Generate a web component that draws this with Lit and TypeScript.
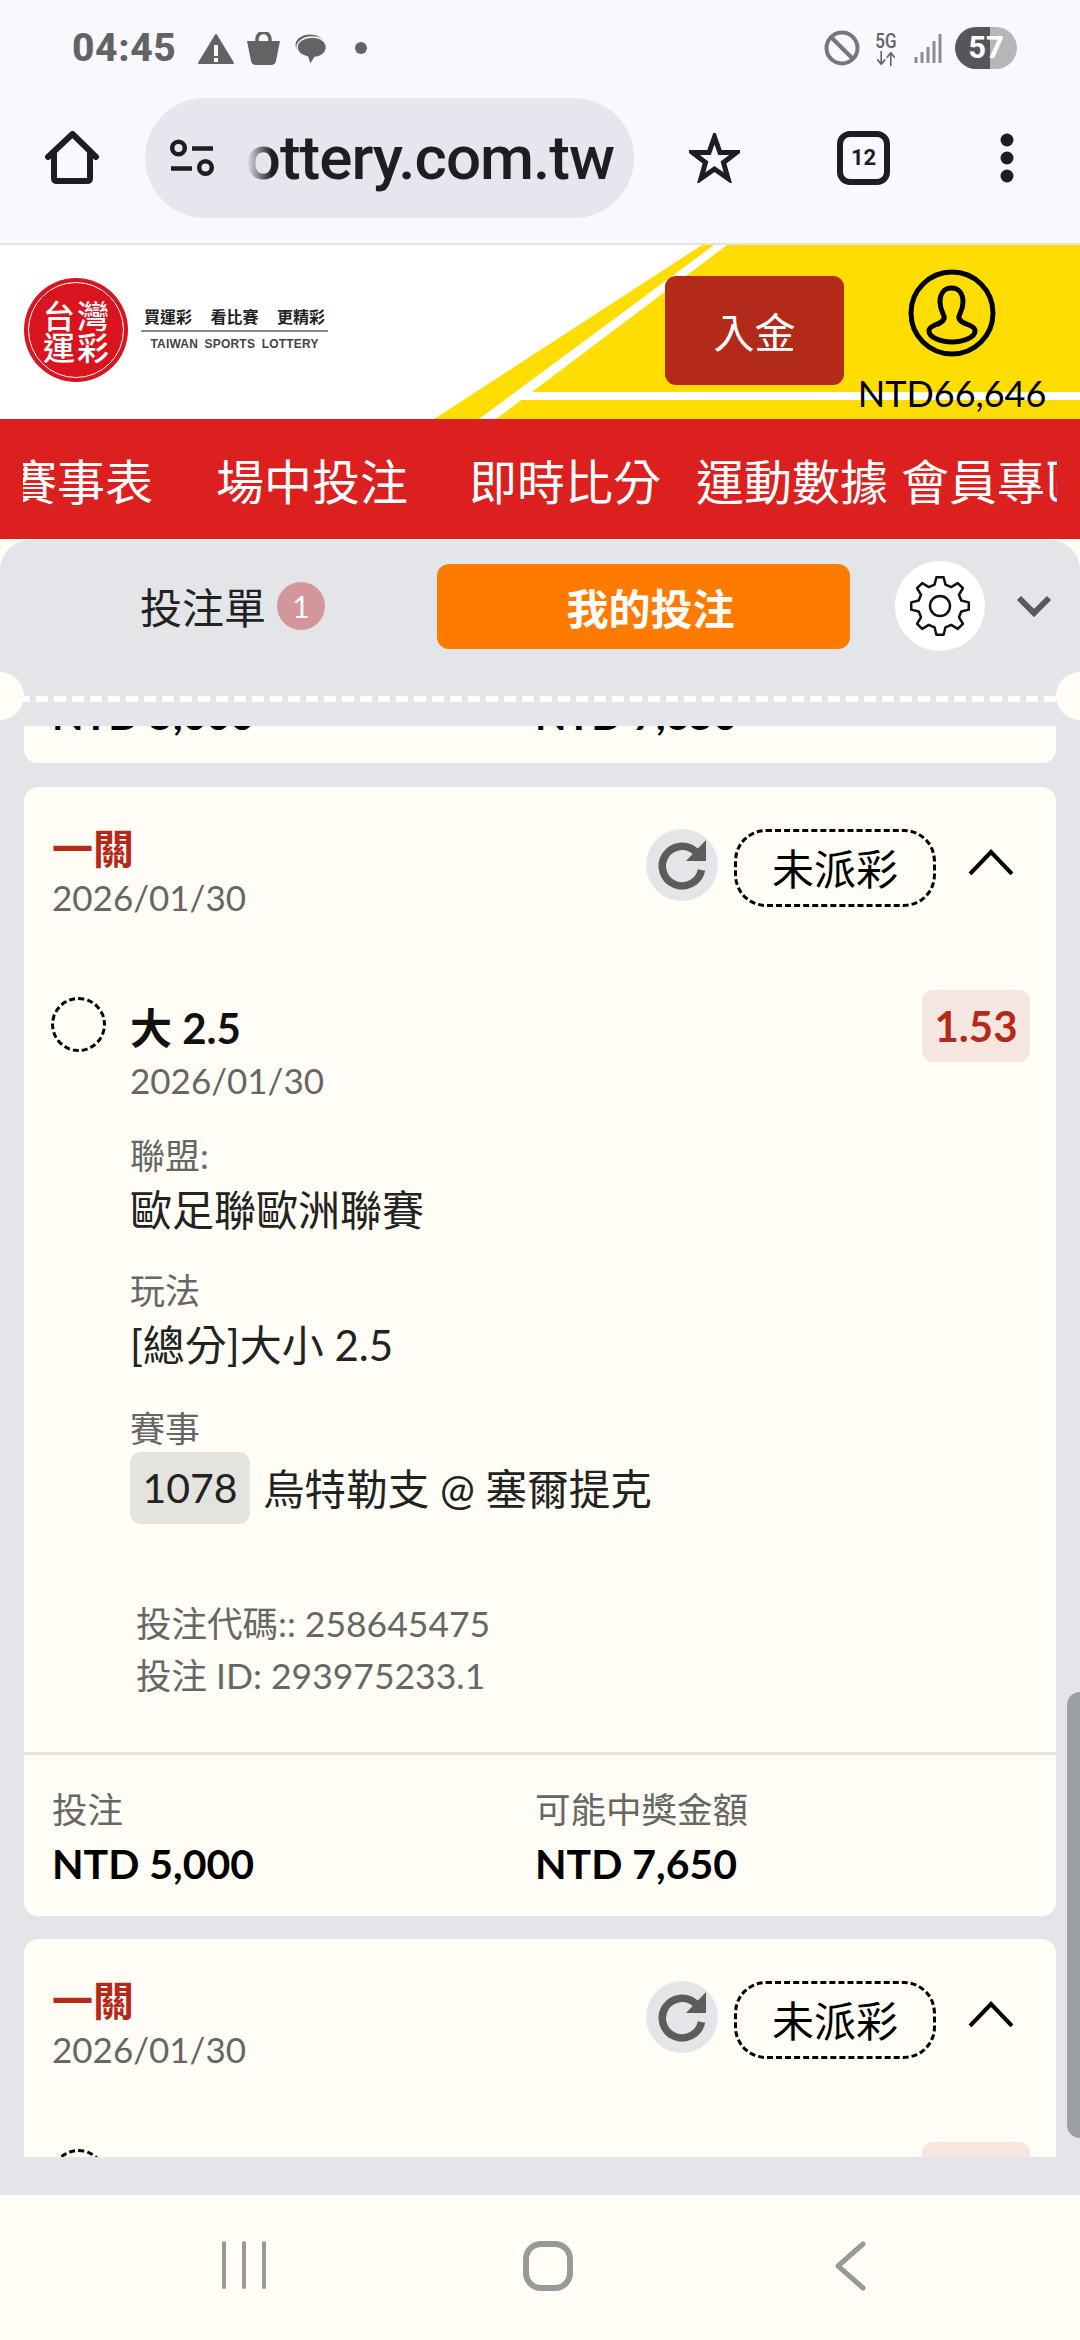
import { LitElement, html, css } from "lit";
import { customElement } from "lit/decorators.js";

// 8 tooth outline for the settings icon, center 32,32
function gearPath(): string {
  const pts: string[] = [];
  const teeth = 8;
  const polar = (r: number, a: number) =>
    `${(32 + r * Math.sin(a)).toFixed(2)} ${(32 - r * Math.cos(a)).toFixed(2)}`;
  for (let i = 0; i < teeth; i++) {
    const a = (i * 2 * Math.PI) / teeth;
    const s = (2 * Math.PI) / teeth;
    pts.push(polar(22, a - s * 0.32), polar(29, a - s * 0.16), polar(29, a + s * 0.16), polar(22, a + s * 0.32));
  }
  return "M" + pts.join("L") + "Z";
}

@customElement("app-root")
export class AppRoot extends LitElement {
  static styles = css`
    :host {
      display: block;
      width: 1080px;
      height: 2340px;
      overflow: hidden;
      background: #fffdf5;
      font-family: Lato, "Noto Sans CJK TC", sans-serif;
      color: #222;
    }
    .page {
      display: flex;
      flex-direction: column;
      height: 2340px;
    }
    svg {
      display: block;
      flex: none;
    }

    /* phone status + browser bar */
    .chrome {
      background: #f8f8fe;
      height: 245px;
      box-sizing: border-box;
      border-bottom: 2px solid #e3e4ea;
      flex: none;
    }
    .status {
      height: 98px;
      display: flex;
      align-items: flex-start;
      padding: 27px 63px 0 72px;
      box-sizing: border-box;
      color: #636366;
    }
    .clock {
      font: 800 39px/42px Roboto, sans-serif;
      letter-spacing: 0.6px;
      width: 126px;
    }
    .warn {
      margin: 6px 13px 0 0;
    }
    .bag {
      margin: 5px 15px 0 0;
    }
    .bubble {
      margin-top: 7px;
    }
    .dot {
      margin: 14px 0 0 27px;
    }
    .dnd {
      margin-top: 3px;
    }
    .signal {
      margin-top: 6px;
    }
    .spacer {
      flex: 1;
    }
    .five-g {
      font: 500 20px/19px Roboto, sans-serif;
      width: 28px;
      text-align: center;
      margin: 5px 14px 0 12px;
      transform: scaleX(0.85);
    }
    .battery {
      width: 62px;
      height: 42px;
      border-radius: 21px;
      background: linear-gradient(90deg, #56565a 0 35px, #b6b6ba 35px);
      color: #fff;
      font: 700 31px/42px Roboto, sans-serif;
      text-align: center;
      margin-left: 13px;
    }
    .toolbar {
      display: flex;
      align-items: center;
      height: 120px;
      padding-left: 45px;
    }
    .pill {
      position: relative;
      width: 489px;
      height: 120px;
      margin-left: 45px;
      border-radius: 60px;
      background: #e6e6ee;
      display: flex;
      align-items: center;
      padding-left: 25px;
      box-sizing: border-box;
      overflow: hidden;
    }
    .url-wrap {
      width: 376px;
      margin-left: 22px;
      overflow: hidden;
      display: flex;
      justify-content: flex-end;
      position: relative;
      flex: none;
    }
    .url {
      font: 500 62px/76px Roboto, sans-serif;
      color: #1d1d22;
      white-space: nowrap;
      letter-spacing: -1px;
      flex: none;
    }
    .fade {
      position: absolute;
      left: 0;
      top: 0;
      bottom: 0;
      width: 34px;
      background: linear-gradient(90deg, #e6e6ee 25%, rgba(230, 230, 238, 0));
    }
    .star {
      margin-left: 55px;
    }
    .tabs {
      margin-left: 97px;
      width: 53px;
      height: 54px;
      box-sizing: border-box;
      border: 6px solid #1d1d22;
      border-radius: 13px;
      font: 700 22px/42px Roboto, sans-serif;
      color: #1d1d22;
      text-align: center;
    }
    .more {
      margin-left: 110px;
    }

    /* site header */
    .site {
      position: relative;
      height: 174px;
      background: #fff;
      display: flex;
      align-items: flex-start;
      flex: none;
    }
    .site-bg {
      position: absolute;
      left: 0;
      top: 0;
    }
    .seal {
      position: relative;
      margin: 33px 0 0 24px;
      width: 104px;
      height: 104px;
      border-radius: 50%;
      background: #d9141e;
      display: flex;
      align-items: center;
      justify-content: center;
    }
    .seal::after {
      content: "";
      position: absolute;
      inset: 4px;
      border: 1.5px solid #fff;
      border-radius: 50%;
    }
    .seal-grid {
      display: grid;
      grid-template-columns: 32px 32px;
      gap: 0 2px;
      font: 500 32px/32px "Noto Sans CJK TC", sans-serif;
      color: #fff;
    }
    .brand {
      position: relative;
      margin: 60px 0 0 13px;
      width: 187px;
    }
    .slogan {
      display: flex;
      justify-content: space-between;
      padding: 0 3px;
      font: 700 16px/22px "Noto Sans CJK TC", sans-serif;
      color: #222;
    }
    .brand-en {
      border-top: 2px solid #8a8a8a;
      margin-top: 3px;
      padding-top: 4px;
      text-align: center;
      font: 700 12px/16px "Liberation Sans", sans-serif;
      letter-spacing: 0.2px;
      word-spacing: 3px;
      color: #444;
      white-space: nowrap;
    }
    .site-right {
      position: relative;
      margin-left: auto;
      display: flex;
      align-items: flex-start;
      padding-right: 33px;
    }
    .deposit {
      width: 179px;
      height: 109px;
      margin-top: 31px;
      border-radius: 11px;
      background: #b32a1a;
      color: #fff;
      font: 400 41px/109px "Noto Sans CJK TC", sans-serif;
      text-align: center;
    }
    .user {
      width: 190px;
      margin-left: 13px;
      padding-top: 24px;
      display: flex;
      flex-direction: column;
      align-items: center;
    }
    .balance {
      margin-top: 19px;
      font: 400 36px/34px Lato, sans-serif;
      color: #000;
      white-space: nowrap;
    }

    /* red menu */
    .menu {
      height: 120px;
      flex: none;
      background: #dc1f1f;
      padding: 0 23px;
      overflow: hidden;
    }
    .menu-track {
      display: flex;
      height: 120px;
      overflow: hidden;
      align-items: center;
      color: #fff;
      font: 400 48px/60px "Noto Sans CJK TC", sans-serif;
      white-space: nowrap;
    }
    .menu-track span {
      flex: none;
    }
    .m1 {
      margin-left: -14px;
    }
    .m2 {
      margin-left: 63px;
    }
    .m3 {
      margin-left: 61px;
    }
    .m4 {
      margin-left: 35px;
    }
    .m5 {
      margin-left: 13px;
    }

    /* bet slip panel */
    .panel {
      position: relative;
      flex: none;
      height: 1655px;
      margin-top: 1px;
      background: #e3e5e8;
      border-radius: 30px 30px 0 0;
      overflow: hidden;
    }
    .panel-head {
      position: relative;
      height: 186px;
    }
    .head-row {
      display: flex;
      align-items: center;
      height: 90px;
      padding-top: 21px;
    }
    .slip-tab {
      width: 437px;
      padding-left: 140px;
      box-sizing: border-box;
      display: flex;
      align-items: center;
      font: 400 42px/60px "Noto Sans CJK TC", sans-serif;
      color: #222;
    }
    .count {
      width: 48px;
      height: 48px;
      margin-left: 11px;
      border-radius: 50%;
      background: #d4959b;
      color: #fff;
      font: 400 30px/48px Lato, sans-serif;
      text-align: center;
    }
    .mine {
      width: 413px;
      height: 85px;
      box-sizing: border-box;
      padding-left: 14px;
      border-radius: 12px;
      background: #ff7b00;
      color: #fff;
      font: 700 42px/85px "Noto Sans CJK TC", sans-serif;
      text-align: center;
    }
    .gear {
      width: 90px;
      height: 90px;
      margin-left: 45px;
      border-radius: 50%;
      background: #fff;
      display: flex;
      align-items: center;
      justify-content: center;
    }
    .collapse {
      margin-left: 31px;
    }
    .tear {
      position: absolute;
      left: 0;
      right: 0;
      top: 156px;
      height: 6px;
      background: repeating-linear-gradient(90deg, #fff 0 12px, transparent 12px 18px);
    }
    .notch {
      position: absolute;
      top: 132px;
      width: 48px;
      height: 48px;
      border-radius: 50%;
      background: #fffdf5;
    }
    .notch.l {
      left: -24px;
    }
    .notch.r {
      right: -24px;
    }
    .list {
      height: 1431px;
      overflow: hidden;
      padding: 0 24px;
      display: flex;
      flex-direction: column;
      gap: 23px;
    }
    .scrollbar {
      position: absolute;
      right: 0;
      top: 1152px;
      width: 13px;
      height: 446px;
      background: #9c9fa3;
      border-radius: 13px 0 0 13px;
    }

    /* bet card */
    .card {
      flex: none;
      height: 1129px;
      box-sizing: border-box;
      background: #fffdf5;
      border-radius: 14px;
      display: flex;
      flex-direction: column;
      overflow: hidden;
    }
    /* the card above, scrolled almost out of view */
    .card.tail {
      height: 37px;
      margin-bottom: 1px;
      border-radius: 0 0 14px 14px;
    }
    .tail .totals {
      border: 0;
      height: auto;
      padding-top: 0;
      margin-top: -45px;
    }
    .card-head {
      display: flex;
      align-items: flex-start;
      padding: 42px 42px 0 28px;
      height: 168px;
      box-sizing: border-box;
      flex: none;
    }
    .leg {
      font: 700 41px/40px "Noto Sans CJK TC", sans-serif;
      color: #b32a1a;
      margin-top: -3px;
    }
    .date {
      font: 400 35px/40px Lato, sans-serif;
      color: #666;
      margin-top: 11px;
    }
    .reload {
      margin-left: auto;
      width: 72px;
      height: 72px;
      border-radius: 50%;
      background: #e3e5e8;
    }
    .state {
      width: 202px;
      height: 78px;
      margin-left: 16px;
      box-sizing: border-box;
      border: 3px dashed #000;
      border-radius: 32px;
      color: #000;
      font: 400 42px/70px "Noto Sans CJK TC", sans-serif;
      text-align: center;
    }
    .fold {
      margin: 20px 0 0 32px;
    }
    .sel {
      display: flex;
      align-items: flex-start;
      padding: 35px 26px 0 27px;
      height: 152px;
      box-sizing: border-box;
      flex: none;
    }
    .radio {
      width: 55px;
      height: 55px;
      margin-top: 7px;
      box-sizing: border-box;
      border: 3px dashed #000;
      border-radius: 50%;
      flex: none;
    }
    .sel-main {
      margin-left: 24px;
      flex: 1;
    }
    .pick {
      font: 700 42px/50px Lato, "Noto Sans CJK TC", sans-serif;
      color: #111;
      margin-top: 13px;
    }
    .odds {
      width: 108px;
      height: 72px;
      border-radius: 11px;
      background: #f6e6e0;
      color: #b32a1a;
      font: 700 42px/72px Lato, sans-serif;
      text-align: center;
      flex: none;
    }
    .sel-date {
      font: 400 35px/40px Lato, sans-serif;
      color: #666;
      margin-top: 7px;
    }
    .field-label {
      font: 400 35px/46px Lato, "Noto Sans CJK TC", sans-serif;
      color: #666;
    }
    .field-value {
      font: 400 42px/64px Lato, "Noto Sans CJK TC", sans-serif;
      color: #222;
    }
    .details {
      padding-left: 106px;
    }
    .group {
      margin-top: 25px;
    }
    .group:last-child {
      margin-top: 28px;
    }
    .event {
      display: flex;
      align-items: center;
    }
    .code {
      width: 120px;
      height: 72px;
      border-radius: 11px;
      background: #e4e3de;
      font: 400 41px/72px Lato, sans-serif;
      text-align: center;
      color: #222;
    }
    .teams {
      margin-left: 13px;
      padding-top: 2px;
      font: 400 41.600px/72px Lato, "Noto Sans CJK TC", sans-serif;
      color: #222;
    }
    .ids {
      padding: 0 0 0 112px;
      margin-top: 73px;
      font: 400 35.500px/52px Lato, "Noto Sans CJK TC", sans-serif;
      color: #666;
    }
    .totals {
      margin-top: auto;
      border-top: 3px solid #e4e3de;
      display: flex;
      height: 164px;
      box-sizing: border-box;
      padding: 31px 0 0 28px;
      flex: none;
    }
    .total {
      width: 483px;
    }
    .total-label {
      font: 400 35.500px/44px "Noto Sans CJK TC", sans-serif;
      color: #666;
    }
    .total-value {
      font: 700 41px/50px Lato, sans-serif;
      color: #000;
      margin-top: 9px;
    }

    /* android nav */
    .nav {
      flex: 1;
      background: #fffdf5;
      display: flex;
      align-items: flex-start;
      padding: 46px 0 0 222px;
    }
    .nav .home {
      margin-left: 255px;
    }
    .nav .back {
      margin-left: 260px;
    }
  `;

  private totals(showLabels: boolean) {
    return html`
      <div class="totals">
        <div class="total">
          ${showLabels ? html`<div class="total-label">投注</div>` : ""}
          <div class="total-value">NTD 5,000</div>
        </div>
        <div class="total">
          ${showLabels ? html`<div class="total-label">可能中獎金額</div>` : ""}
          <div class="total-value">NTD 7,650</div>
        </div>
      </div>
    `;
  }

  private cardTop() {
    return html`
      <div class="card-head">
        <div>
          <div class="leg">一關</div>
          <div class="date">2026/01/30</div>
        </div>
        <div class="reload">
          <svg width="72" height="72" viewBox="0 0 72 72">
            <path d="M55.500 41A19.800 19.800 0 1 1 50 23" fill="none" stroke="#5c5c5c" stroke-width="7.500" />
            <path d="M60 11V32H40Z" fill="#5c5c5c" />
          </svg>
        </div>
        <div class="state">未派彩</div>
        <svg class="fold" width="46" height="26" viewBox="0 0 46 26">
          <path d="M2 25L23 3L44 25" fill="none" stroke="#000" stroke-width="4" />
        </svg>
      </div>
    `;
  }

  private selection(withText: boolean) {
    return html`
      <div class="sel">
        <div class="radio"></div>
        <div class="sel-main">
          ${withText
            ? html`<div class="pick">大 2.5</div>
                <div class="sel-date">2026/01/30</div>`
            : ""}
        </div>
        <div class="odds">${withText ? "1.53" : ""}</div>
      </div>
    `;
  }

  private fullCard() {
    return html`
      <div class="card">
        ${this.cardTop()} ${this.selection(true)}
        <div class="details">
          <div class="group">
            <div class="field-label">聯盟:</div>
            <div class="field-value">歐足聯歐洲聯賽</div>
          </div>
          <div class="group">
            <div class="field-label">玩法</div>
            <div class="field-value">[總分]大小 2.5</div>
          </div>
          <div class="group">
            <div class="field-label">賽事</div>
            <div class="event">
              <div class="code">1078</div>
              <div class="teams">烏特勒支 @ 塞爾提克</div>
            </div>
          </div>
        </div>
        <div class="ids">
          <div>投注代碼:: 258645475</div>
          <div>投注 ID: 293975233.1</div>
        </div>
        ${this.totals(true)}
      </div>
    `;
  }

  render() {
    return html`
      <div class="page">
        <div class="chrome">
          <div class="status">
            <div class="clock">04:45</div>
            <svg class="warn" width="36" height="32" viewBox="0 0 36 32">
              <path d="M18 2L35 30H1Z" fill="#636366" stroke="#636366" stroke-width="2" stroke-linejoin="round" />
              <path d="M16 12h4v11h-4zM16 25h4v4h-4z" fill="#f8f8fe" />
            </svg>
            <svg class="bag" width="33" height="33" viewBox="0 0 33 33">
              <path d="M0 9H33L29 29Q28 33 24 33H9Q5 33 4 29Z" fill="#636366" />
              <path d="M10 10V7A6.500 6.500 0 0 1 23 7V10" fill="none" stroke="#636366" stroke-width="3.500" />
            </svg>
            <svg class="bubble" width="32" height="31" viewBox="0 0 32 31">
              <ellipse cx="15" cy="11" rx="14.500" ry="10.500" fill="#636366" />
              <path d="M17 3C25 3 31.500 7.500 31.500 13.500C31.500 19 26 23 20 23.500L15 31L12.500 23C6 21.500 2 18 2 13.500C2 7.500 9 3 17 3Z" fill="#636366" stroke="#f8f8fe" stroke-width="1.500" />
            </svg>
            <svg class="dot" width="14" height="14" viewBox="0 0 14 14">
              <circle cx="7" cy="7" r="6" fill="#636366" />
            </svg>
            <div class="spacer"></div>
            <svg class="dnd" width="36" height="36" viewBox="0 0 36 36">
              <circle cx="18" cy="18" r="15.500" fill="none" stroke="#77777b" stroke-width="4" />
              <path d="M7 7L29 29" stroke="#77777b" stroke-width="4" />
            </svg>
            <div class="five-g">
              5G
              <svg width="28" height="15" viewBox="0 0 26 16">
                <path d="M7 0V14M2 9L7 14L12 9M19 16V2M14 7L19 2L24 7" fill="none" stroke="#636366" stroke-width="2" />
              </svg>
            </div>
            <svg class="signal" width="28" height="30" viewBox="0 0 28 30">
              <path d="M2 24V30M8 19V30M14 14V30M20 8V30M26 1V30" stroke="#8b8b90" stroke-width="3" />
            </svg>
            <div class="battery">57</div>
          </div>
          <div class="toolbar">
            <svg width="55" height="54" viewBox="0 0 55 54">
              <path d="M3 26L27.500 3L51 26M9 22V47Q9 50 12 50H42Q45 50 45 47V22" fill="none" stroke="#1d1d22" stroke-width="6" stroke-linecap="round" stroke-linejoin="round" />
            </svg>
            <div class="pill">
              <svg width="46" height="38" viewBox="0 0 46 38">
                <circle cx="8.500" cy="9" r="6.300" fill="none" stroke="#1d1d22" stroke-width="4.500" />
                <path d="M22 9.500H43M1 29.500H22" stroke="#1d1d22" stroke-width="4.500" />
                <circle cx="35.500" cy="28.500" r="6.300" fill="none" stroke="#1d1d22" stroke-width="4.500" />
              </svg>
              <div class="url-wrap">
                <div class="url">lottery.com.tw</div>
                <div class="fade"></div>
              </div>
            </div>
            <svg class="star" width="51" height="50" viewBox="0 0 51 50">
              <path d="M25.500 4L31 19.500H47.500L34.500 29.500L39 45.500L25.500 36L12 45.500L16.500 29.500L3.500 19.500H20Z" fill="none" stroke="#1d1d22" stroke-width="5" stroke-linejoin="miter" />
            </svg>
            <div class="tabs">12</div>
            <svg class="more" width="14" height="50" viewBox="0 0 14 50">
              <circle cx="7" cy="7" r="6.500" fill="#1d1d22" />
              <circle cx="7" cy="25" r="6.500" fill="#1d1d22" />
              <circle cx="7" cy="43" r="6.500" fill="#1d1d22" />
            </svg>
          </div>
        </div>

        <div class="site">
          <svg class="site-bg" width="1080" height="174" viewBox="0 0 1080 174">
            <path d="M434 174L702 0H714L479 174Z" fill="#ffdd00" />
            <path d="M496 174L727 0H1080V174Z" fill="#ffdd00" />
            <path d="M527 147H1080V155H516Z" fill="#fff" />
          </svg>
          <div class="seal">
            <div class="seal-grid"><span>台</span><span>灣</span><span>運</span><span>彩</span></div>
          </div>
          <div class="brand">
            <div class="slogan"><span>買運彩</span><span>看比賽</span><span>更精彩</span></div>
            <div class="brand-en">TAIWAN SPORTS LOTTERY</div>
          </div>
          <div class="site-right">
            <div class="deposit">入金</div>
            <div class="user">
              <svg width="88" height="88" viewBox="0 0 88 88">
                <circle cx="44" cy="44" r="41" fill="none" stroke="#000" stroke-width="5" />
                <path d="M43.500 19C36 19 32 25 32 33C32 40 35 44 36 47C37 51 33 54 27 56C22 58 21 60 21 62C21 68 32 73 44 73C56 73 67 68 67 62C67 60 66 58 61 56C55 54 50 51 51 47C52 44 55 40 55 33C55 25 51 19 43.500 19Z" fill="none" stroke="#000" stroke-width="5" />
              </svg>
              <div class="balance">NTD66,646</div>
            </div>
          </div>
        </div>

        <div class="menu">
          <div class="menu-track">
            <span class="m1">賽事表</span>
            <span class="m2">場中投注</span>
            <span class="m3">即時比分</span>
            <span class="m4">運動數據</span>
            <span class="m5">會員專區</span>
          </div>
        </div>

        <div class="panel">
          <div class="panel-head">
            <div class="head-row">
              <div class="slip-tab">投注單<span class="count">1</span></div>
              <div class="mine">我的投注</div>
              <div class="gear">
                <svg width="64" height="64" viewBox="0 0 64 64">
                  <path d=${gearPath()} fill="none" stroke="#111" stroke-width="2.500" stroke-linejoin="round" />
                  <circle cx="32" cy="32" r="10" fill="none" stroke="#111" stroke-width="2.500" />
                </svg>
              </div>
              <svg class="collapse" width="36" height="22" viewBox="0 0 36 22">
                <path d="M3 3L18 18L33 3" fill="none" stroke="#555b60" stroke-width="6" />
              </svg>
            </div>
            <div class="tear"></div>
            <div class="notch l"></div>
            <div class="notch r"></div>
          </div>
          <div class="list">
            <div class="card tail">${this.totals(false)}</div>
            ${this.fullCard()}
            <div class="card">${this.cardTop()} ${this.selection(false)}</div>
          </div>
          <div class="scrollbar"></div>
        </div>

        <div class="nav">
          <svg width="46" height="48" viewBox="0 0 46 48">
            <path d="M2 2V46M22 2V46M42 2V46" stroke="#999" stroke-width="4" stroke-linecap="round" />
          </svg>
          <svg class="home" width="50" height="50" viewBox="0 0 50 50">
            <rect x="3" y="3" width="44" height="44" rx="15" fill="none" stroke="#999" stroke-width="6" />
          </svg>
          <svg class="back" width="36" height="50" viewBox="0 0 36 50">
            <path d="M30 3L5 25L30 47" fill="none" stroke="#999" stroke-width="5" stroke-linecap="round" stroke-linejoin="round" />
          </svg>
        </div>
      </div>
    `;
  }
}
